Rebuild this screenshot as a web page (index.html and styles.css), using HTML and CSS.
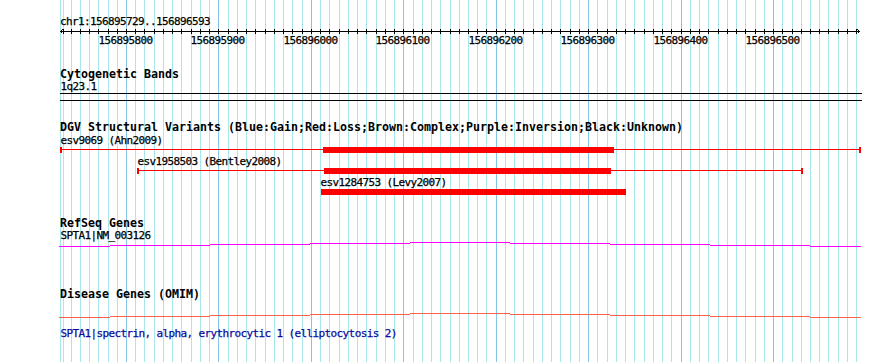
FILE: index.html
```html
<!DOCTYPE html>
<html lang="en">
<head>
<meta charset="utf-8">
<title>Genome browser</title>
<link rel="stylesheet" href="styles.css">
</head>
<body>
<div class="panel">
  <svg class="grid" width="890" height="362" viewBox="0 0 890 362" aria-hidden="true">
    <path class="grid-minor" d="M60.5 0V362M63.5 0V362M71.5 0V362M80.5 0V362M89.5 0V362M98.5 0V362M108.5 0V362M117.5 0V362M135.5 0V362M144.5 0V362M154.5 0V362M163.5 0V362M172.5 0V362M181.5 0V362M191.5 0V362M200.5 0V362M209.5 0V362M228.5 0V362M237.5 0V362M246.5 0V362M255.5 0V362M265.5 0V362M274.5 0V362M283.5 0V362M292.5 0V362M302.5 0V362M320.5 0V362M329.5 0V362M339.5 0V362M348.5 0V362M357.5 0V362M366.5 0V362M376.5 0V362M385.5 0V362M394.5 0V362M413.5 0V362M422.5 0V362M431.5 0V362M440.5 0V362M450.5 0V362M459.5 0V362M468.5 0V362M477.5 0V362M486.5 0V362M505.5 0V362M514.5 0V362M523.5 0V362M533.5 0V362M542.5 0V362M551.5 0V362M560.5 0V362M570.5 0V362M579.5 0V362M597.5 0V362M607.5 0V362M616.5 0V362M625.5 0V362M634.5 0V362M644.5 0V362M653.5 0V362M662.5 0V362M671.5 0V362M690.5 0V362M699.5 0V362M708.5 0V362M718.5 0V362M727.5 0V362M736.5 0V362M745.5 0V362M755.5 0V362M764.5 0V362M782.5 0V362M792.5 0V362M801.5 0V362M810.5 0V362M819.5 0V362M828.5 0V362M838.5 0V362M847.5 0V362M856.5 0V362"/>
    <path class="grid-major" d="M126.5 0V362M218.5 0V362M311.5 0V362M403.5 0V362M496.5 0V362M588.5 0V362M681.5 0V362M773.5 0V362"/>
  </svg>

  <div class="tracks">
    <section class="track track-ruler">
      <div class="ruler-label">chr1:156895729..156896593</div>
      <svg class="canvas" width="890" height="22" viewBox="0 0 890 22">
        <path class="ruler-line" d="M60 3.5H860"/>
        <polyline class="ruler-line" points="62.5,1.5 60.5,3.5 62.5,5.5"/>
        <polyline class="ruler-line" points="857.5,1.5 859.5,3.5 857.5,5.5"/>
        <path class="ruler-line" d="M63.5 1V6M71.5 1V6M80.5 1V6M89.5 1V6M98.5 1V6M108.5 1V6M117.5 1V6M126.5 1V6M135.5 1V6M144.5 1V6M154.5 1V6M163.5 1V6M172.5 1V6M181.5 1V6M191.5 1V6M200.5 1V6M209.5 1V6M218.5 1V6M228.5 1V6M237.5 1V6M246.5 1V6M255.5 1V6M265.5 1V6M274.5 1V6M283.5 1V6M292.5 1V6M302.5 1V6M311.5 1V6M320.5 1V6M329.5 1V6M339.5 1V6M348.5 1V6M357.5 1V6M366.5 1V6M376.5 1V6M385.5 1V6M394.5 1V6M403.5 1V6M413.5 1V6M422.5 1V6M431.5 1V6M440.5 1V6M450.5 1V6M459.5 1V6M468.5 1V6M477.5 1V6M486.5 1V6M496.5 1V6M505.5 1V6M514.5 1V6M523.5 1V6M533.5 1V6M542.5 1V6M551.5 1V6M560.5 1V6M570.5 1V6M579.5 1V6M588.5 1V6M597.5 1V6M607.5 1V6M616.5 1V6M625.5 1V6M634.5 1V6M644.5 1V6M653.5 1V6M662.5 1V6M671.5 1V6M681.5 1V6M690.5 1V6M699.5 1V6M708.5 1V6M718.5 1V6M727.5 1V6M736.5 1V6M745.5 1V6M755.5 1V6M764.5 1V6M773.5 1V6M782.5 1V6M792.5 1V6M801.5 1V6M810.5 1V6M819.5 1V6M828.5 1V6M838.5 1V6M847.5 1V6M856.5 1V6"/>
        <g class="tick-labels">
          <text x="125.5" y="16">156895800</text>
          <text x="217.5" y="16">156895900</text>
          <text x="310.5" y="16">156896000</text>
          <text x="402.5" y="16">156896100</text>
          <text x="495.5" y="16">156896200</text>
          <text x="587.5" y="16">156896300</text>
          <text x="680.5" y="16">156896400</text>
          <text x="772.5" y="16">156896500</text>
        </g>
      </svg>
    </section>

    <section class="track track-cyto">
      <h2 class="track-title">Cytogenetic Bands</h2>
      <svg class="canvas" width="890" height="29" viewBox="0 0 890 29">
        <text class="feat-label" x="60.5" y="9">1q23.1</text>
        <path class="band" d="M60 12.5H862M60 19.5H862"/>
      </svg>
    </section>

    <section class="track track-dgv">
      <h2 class="track-title">DGV Structural Variants (Blue:Gain;Red:Loss;Brown:Complex;Purple:Inversion;Black:Unknown)</h2>
      <svg class="canvas" width="890" height="66" viewBox="0 0 890 66">
        <text class="feat-label" x="60.5" y="10">esv9069 (Ahn2009)</text>
        <path class="sv-line" d="M61 15.5H860"/>
        <rect class="sv-fill" x="60" y="13" width="2" height="6"/>
        <rect class="sv-fill" x="859" y="13" width="2" height="6"/>
        <rect class="sv-fill" x="323" y="13" width="291" height="6"/>

        <text class="feat-label" x="137.5" y="31">esv1958503 (Bentley2008)</text>
        <path class="sv-line" d="M138 36.5H802"/>
        <rect class="sv-fill" x="137" y="34" width="2" height="6"/>
        <rect class="sv-fill" x="801" y="34" width="2" height="6"/>
        <rect class="sv-fill" x="324" y="34" width="287" height="6"/>

        <text class="feat-label" x="320.5" y="52">esv1284753 (Levy2007)</text>
        <rect class="sv-fill" x="321" y="55" width="305" height="6"/>
      </svg>
    </section>

    <section class="track track-refseq">
      <h2 class="track-title">RefSeq Genes</h2>
      <svg class="canvas" width="890" height="40" viewBox="0 0 890 40">
        <text class="feat-label" x="60.5" y="9">SPTA1|NM_003126</text>
        <path class="gene-line refseq" d="M59 16.5H110M110 15.5H210M210 14.5H310M310 13.5H410M410 12.5H510M510 13.5H610M610 14.5H710M710 15.5H810M810 16.5H861"/>
      </svg>
    </section>

    <section class="track track-omim">
      <h2 class="track-title">Disease Genes (OMIM)</h2>
      <svg class="canvas" width="890" height="61" viewBox="0 0 890 61">
        <path class="gene-line omim" d="M59 16.5H110M110 15.5H210M210 14.5H310M310 13.5H410M410 12.5H510M510 13.5H610M610 14.5H710M710 15.5H810M810 16.5H861"/>
        <text class="feat-label link" x="60.5" y="36">SPTA1|spectrin, alpha, erythrocytic 1 (elliptocytosis 2)</text>
      </svg>
    </section>
  </div>
</div>
</body>
</html>
```

FILE: styles.css
```css
html, body {
  margin: 0;
  padding: 0;
  background: #ffffff;
}

.panel {
  position: relative;
  width: 890px;
  height: 362px;
  overflow: hidden;
  background: #ffffff;
}

.grid {
  position: absolute;
  left: 0;
  top: 0;
  shape-rendering: crispEdges;
}

.grid-minor {
  fill: none;
  stroke: #a8e8ec;
  stroke-width: 1;
}

.grid-major {
  fill: none;
  stroke: #86c4ea;
  stroke-width: 1;
}

.tracks {
  position: relative;
  display: flex;
  flex-direction: column;
}

.track {
  display: flex;
  flex-direction: column;
  box-sizing: border-box;
}

.track-ruler { height: 50px; }
.track-cyto { height: 60px; padding-top: 18px; }
.track-dgv { height: 90px; padding-top: 11px; }
.track-refseq { height: 70px; padding-top: 17px; }
.track-omim { height: 92px; padding-top: 18px; }

.ruler-label {
  padding: 15px 0 0 60px;
  font-family: "DejaVu Sans Mono", "Liberation Mono", monospace;
  font-size: 11px;
  line-height: 13px;
  letter-spacing: -0.62px;
  color: #000;
  -webkit-text-stroke: 0.25px #000;
  white-space: nowrap;
}

.track-title {
  margin: 0;
  padding-left: 60px;
  font-family: "DejaVu Sans Mono", "Liberation Mono", monospace;
  font-weight: bold;
  font-size: 11.63px;
  line-height: 13px;
  color: #000;
  white-space: nowrap;
}

.canvas {
  display: block;
  overflow: visible;
}

.canvas path,
.canvas polyline,
.canvas rect {
  shape-rendering: crispEdges;
}

.ruler-line {
  fill: none;
  stroke: #000;
  stroke-width: 1;
}

.tick-labels text,
.feat-label {
  font-family: "DejaVu Sans Mono", "Liberation Mono", monospace;
  font-size: 11px;
  letter-spacing: -0.62px;
  fill: #000;
  stroke: #000;
  stroke-width: 0.25px;
}

.tick-labels text {
  text-anchor: middle;
}

.feat-label.link {
  fill: #0b0ba0;
  stroke: #0b0ba0;
}

.band {
  fill: none;
  stroke: #000;
  stroke-width: 1;
}

.sv-line {
  fill: none;
  stroke: #ff0000;
  stroke-width: 1;
}

.sv-fill {
  fill: #ff0000;
}

.gene-line {
  fill: none;
  stroke-width: 1;
}

.gene-line.refseq { stroke: #ff00ff; }
.gene-line.omim { stroke: #ff6347; }
```
